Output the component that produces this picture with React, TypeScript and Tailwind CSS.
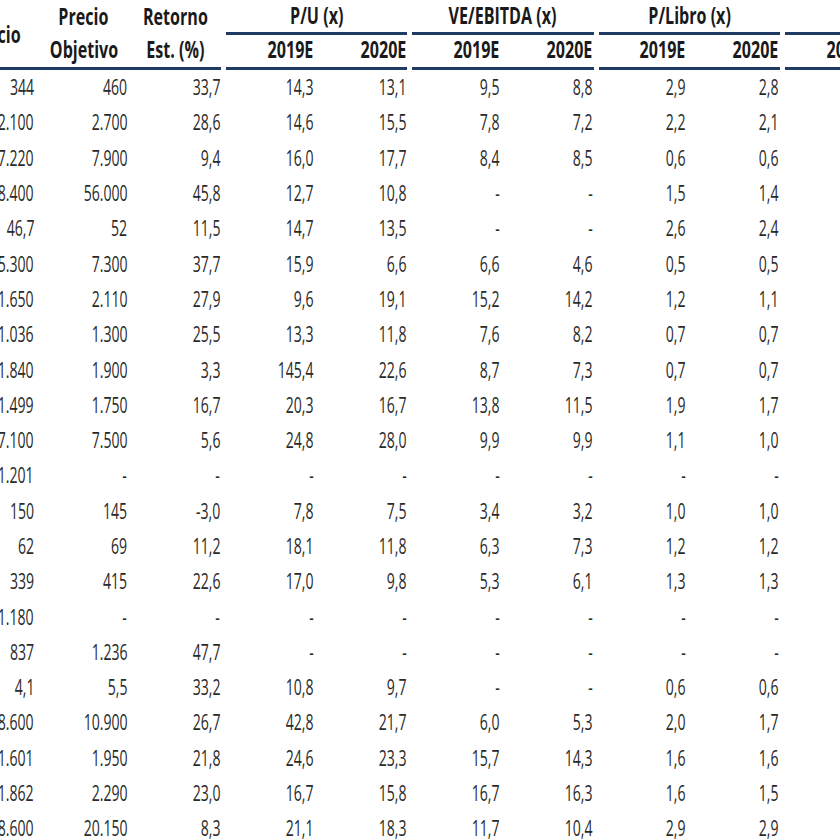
const rows: string[][] = [
  ["344", "460", "33,7", "14,3", "13,1", "9,5", "8,8", "2,9", "2,8"],
  ["2.100", "2.700", "28,6", "14,6", "15,5", "7,8", "7,2", "2,2", "2,1"],
  ["7.220", "7.900", "9,4", "16,0", "17,7", "8,4", "8,5", "0,6", "0,6"],
  ["38.400", "56.000", "45,8", "12,7", "10,8", "-", "-", "1,5", "1,4"],
  ["46,7", "52", "11,5", "14,7", "13,5", "-", "-", "2,6", "2,4"],
  ["5.300", "7.300", "37,7", "15,9", "6,6", "6,6", "4,6", "0,5", "0,5"],
  ["1.650", "2.110", "27,9", "9,6", "19,1", "15,2", "14,2", "1,2", "1,1"],
  ["1.036", "1.300", "25,5", "13,3", "11,8", "7,6", "8,2", "0,7", "0,7"],
  ["1.840", "1.900", "3,3", "145,4", "22,6", "8,7", "7,3", "0,7", "0,7"],
  ["1.499", "1.750", "16,7", "20,3", "16,7", "13,8", "11,5", "1,9", "1,7"],
  ["7.100", "7.500", "5,6", "24,8", "28,0", "9,9", "9,9", "1,1", "1,0"],
  ["1.201", "-", "-", "-", "-", "-", "-", "-", "-"],
  ["150", "145", "-3,0", "7,8", "7,5", "3,4", "3,2", "1,0", "1,0"],
  ["62", "69", "11,2", "18,1", "11,8", "6,3", "7,3", "1,2", "1,2"],
  ["339", "415", "22,6", "17,0", "9,8", "5,3", "6,1", "1,3", "1,3"],
  ["1.180", "-", "-", "-", "-", "-", "-", "-", "-"],
  ["837", "1.236", "47,7", "-", "-", "-", "-", "-", "-"],
  ["4,1", "5,5", "33,2", "10,8", "9,7", "-", "-", "0,6", "0,6"],
  ["8.600", "10.900", "26,7", "42,8", "21,7", "6,0", "5,3", "2,0", "1,7"],
  ["1.601", "1.950", "21,8", "24,6", "23,3", "15,7", "14,3", "1,6", "1,6"],
  ["1.862", "2.290", "23,0", "16,7", "15,8", "16,7", "16,3", "1,6", "1,5"],
  ["18.600", "20.150", "8,3", "21,1", "18,3", "11,7", "10,4", "2,9", "2,9"],
];

const groups = ["P/U (x)", "VE/EBITDA (x)", "P/Libro (x)", "D/P (%)"];

// condensed look: Open Sans squeezed horizontally
const R = "inline-block origin-right scale-x-[0.67] whitespace-nowrap";
const C = "inline-block origin-center scale-x-[0.67] whitespace-nowrap";

export default function App() {
  return (
    <div
      className="w-[840px] h-[840px] overflow-hidden bg-white text-[#2a2a2a]"
      style={{ fontFamily: '"Open Sans", "Liberation Sans", sans-serif' }}
    >
      <div className="ml-[-58.1px] w-[1100px]">
        {/* Header */}
        <div className="flex text-[24px] font-bold text-[#1a1a1a] leading-[24px]">
          <div className="w-[279.3px] h-[70px] border-b-[3px] border-[#1f3a63]">
            <div className="grid grid-cols-[93.1px_93.1px_93.1px] h-[67px]">
              <div className="flex items-center justify-end pr-[14px]">
                <span className={R}>Precio</span>
              </div>
              <div className="flex flex-col items-center pl-[4px]">
                <div className="h-[35px] pt-[4px]">
                  <span className={C}>Precio</span>
                </div>
                <div className="h-[32px] pt-[2px]">
                  <span className={C}>Objetivo</span>
                </div>
              </div>
              <div className="flex flex-col items-center pl-[2px]">
                <div className="h-[35px] pt-[4px]">
                  <span className={C}>Retorno</span>
                </div>
                <div className="h-[32px] pt-[2px]">
                  <span className={C}>Est. (%)</span>
                </div>
              </div>
            </div>
          </div>
          {groups.map((g) => (
            <div key={g} className="w-[186.2px] pl-[5px]">
              <div className="h-[35px] pt-[3px] text-center border-b-[3px] border-[#1f3a63]">
                <span className={C}>{g}</span>
              </div>
              <div className="grid grid-cols-[88.1px_93.1px] h-[35px] pt-[2px] border-b-[3px] border-[#1f3a63]">
                <div className="text-right pr-[1px]">
                  <span className={R}>2019E</span>
                </div>
                <div className="text-right pr-[1px]">
                  <span className={R}>2020E</span>
                </div>
              </div>
            </div>
          ))}
        </div>

        {/* Body */}
        <div className="text-[21px]">
          {rows.map((r, i) => (
            <div key={i} className="grid grid-cols-[repeat(9,93.1px)] h-[35.3px] items-center">
              {r.map((v, j) => (
                <div key={j} className="text-right pr-[1px] leading-none">
                  <span className={R}>{v}</span>
                </div>
              ))}
            </div>
          ))}
        </div>
      </div>
    </div>
  );
}
